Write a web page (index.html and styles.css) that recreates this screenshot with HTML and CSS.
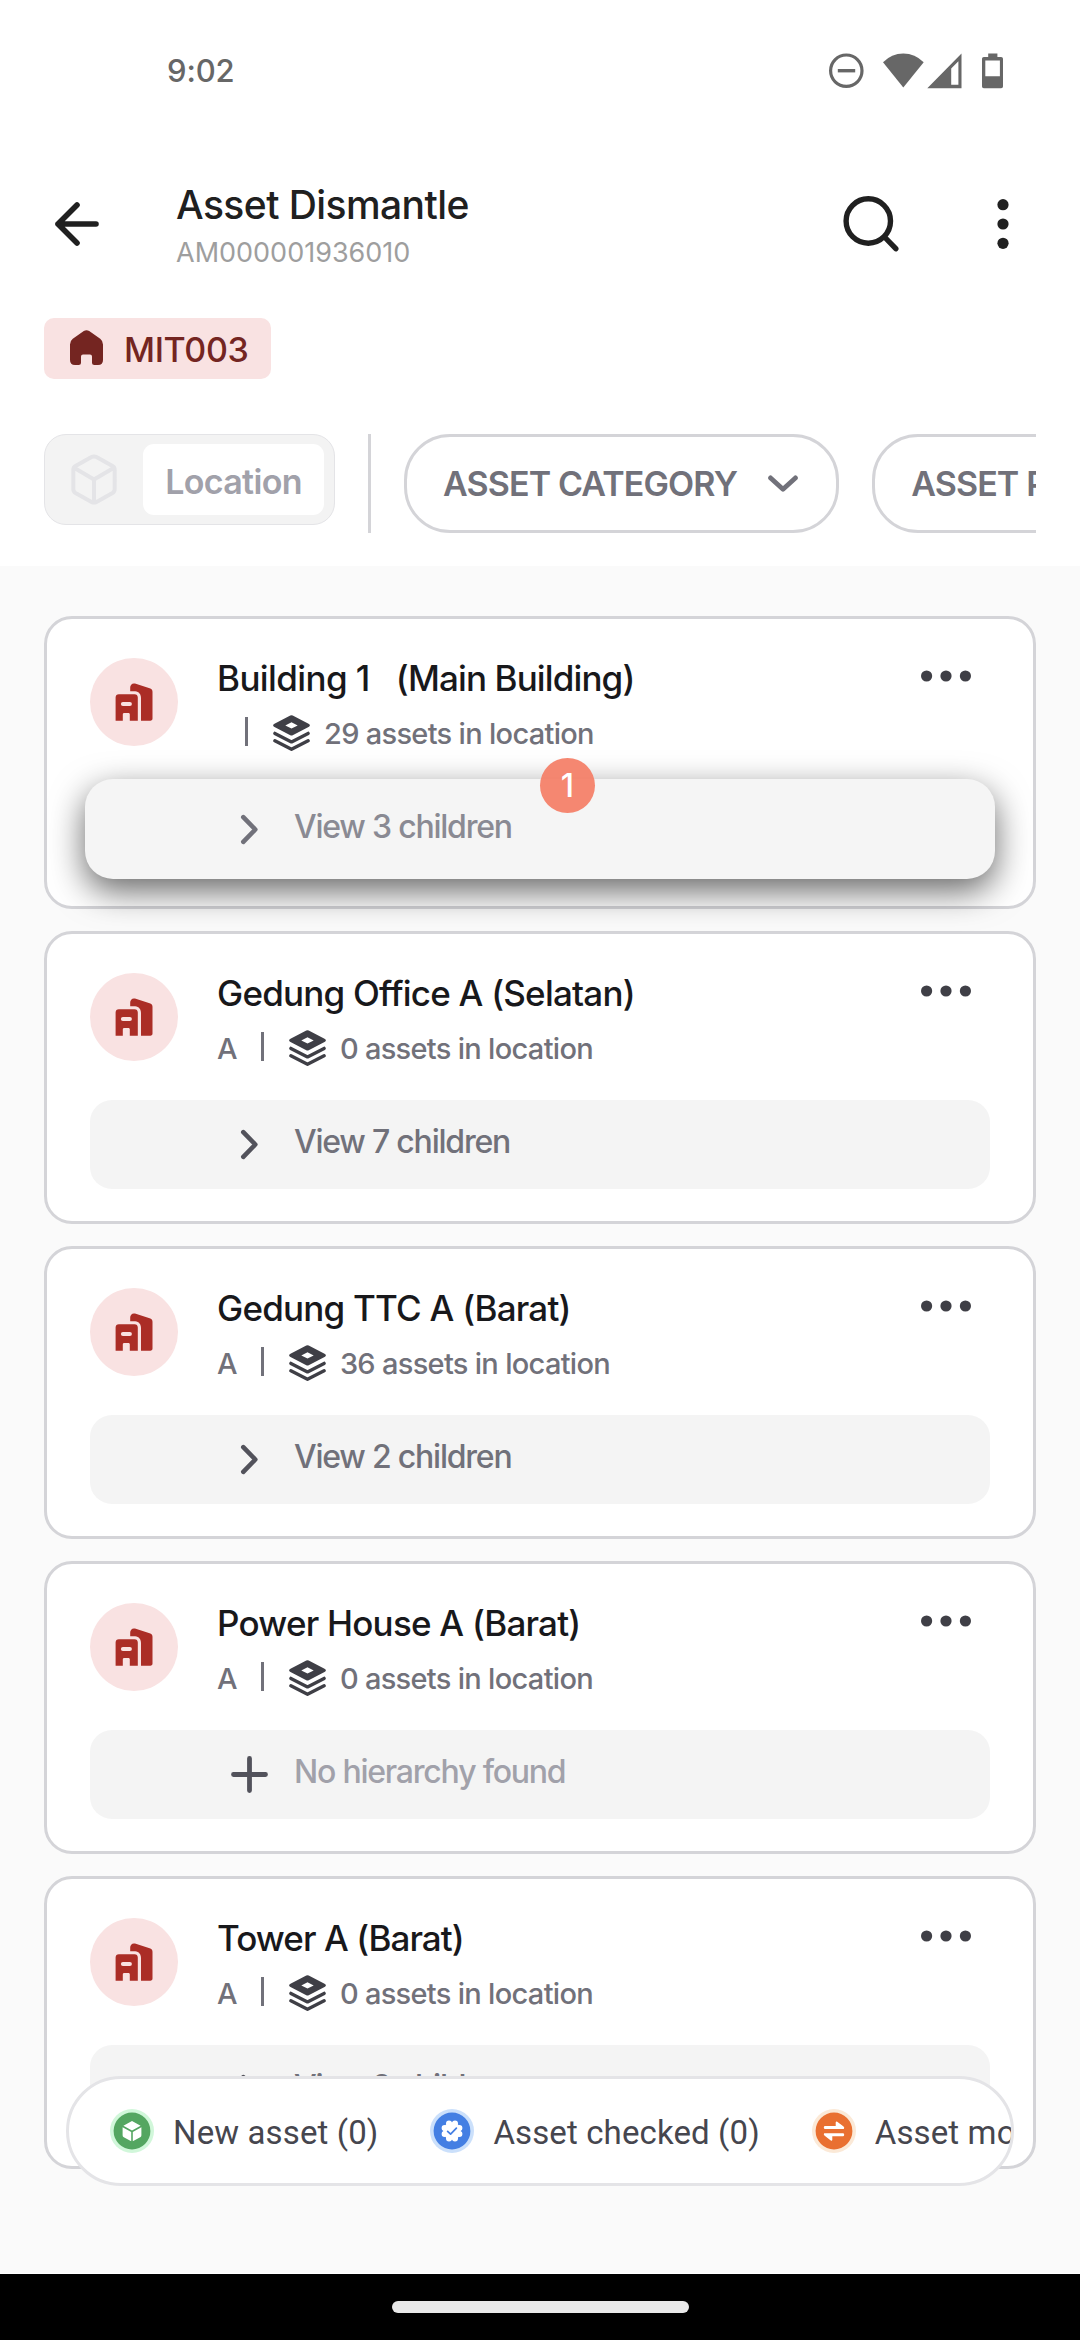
FILE: index.html
```html
<!DOCTYPE html>
<html lang="en">
<head>
<meta charset="utf-8">
<title>Asset Dismantle</title>
<link rel="stylesheet" href="styles.css">
</head>
<body>
<svg class="sprite" aria-hidden="true">
  <symbol id="building" viewBox="0 0 38 38">
    <path fill="#ab2d26" d="M15.2 8.3V4.6c0-2.9 2.1-4.7 4.8-4L34.6 5.200c1.900.7 2.900 1.600 2.900 3.600V35.500c0 1.400-.8 2.200-2.200 2.200H26V15c0-3.700-2-6.200-5.800-6.700z"/>
    <path fill="#ab2d26" fill-rule="evenodd" d="M.6 14.500c0-2.100 1.200-3.300 3.300-3.300h15.600c2.100 0 3.300 1.200 3.300 3.300v23.200h-8v-6.200c0-1-.5-1.500-1.500-1.500H9.300c-1 0-1.500.5-1.500 1.500v6.200H.6zM7.900 19a2 2 0 0 0 0 4h7a2 2 0 0 0 0-4z"/>
  </symbol>
  <symbol id="layers" viewBox="0 0 37 36">
    <path fill="#3f3f46" fill-rule="evenodd" d="M17.300.6q1.200-.6 2.400 0L36 8.900q1.800 1.300 0 2.800L19.700 20.200q-1.200.6-2.400 0L1 11.700Q-.8 10.200 1 8.900zM18.500 7.200L12.300 10.400l6.200 3.200 6.200-3.200z"/>
    <path fill="none" stroke="#3f3f46" stroke-width="3.400" stroke-linecap="round" stroke-linejoin="round" d="M1.900 18.400L18.500 26.900 35.100 18.400M1.900 25.800L18.500 34.300 35.100 25.800"/>
  </symbol>
  <symbol id="more" viewBox="0 0 50 12">
    <g fill="#3f3f46"><circle cx="5.600" cy="6" r="5.600"/><circle cx="25" cy="6" r="5.600"/><circle cx="44.400" cy="6" r="5.600"/></g>
  </symbol>
  <symbol id="chevron" viewBox="0 0 37 37">
    <path fill="none" stroke="currentColor" stroke-width="4.600" stroke-linecap="round" stroke-linejoin="round" d="M12.300 6.200L24.300 18.500 12.300 30.800"/>
  </symbol>
  <symbol id="plus" viewBox="0 0 37 37">
    <path fill="none" stroke="currentColor" stroke-width="4.800" stroke-linecap="round" d="M18.500 2.500v32M2.500 18.500h32"/>
  </symbol>
</svg>

<div class="screen">
  <div class="status">
    <span class="clock">9:02</span>
    <svg class="status-icons" width="176" height="36" viewBox="0 0 176 36">
      <circle cx="18.300" cy="17.700" r="15.700" fill="none" stroke="#676767" stroke-width="3.200"/>
      <path fill="#676767" d="M9.800 16h17.400v3.400H9.800z"/>
      <path fill="#676767" d="M55 9.300Q63.500.5 75.300.5T95.700 9.300L75.300 34.500z"/>
      <path fill="#676767" fill-rule="evenodd" d="M99.300 35.200L133.500.5v34.700zM123.200 15.500v16.200h7.200V8.300z"/>
      <path fill="#676767" fill-rule="evenodd" d="M160.200.5h9.200v3.600h3.700c1.200 0 1.900.8 1.900 1.900v27.300c0 1.200-.7 2-1.900 2h-17.200c-1.200 0-1.900-.8-1.900-2V6c0-1.100.7-1.900 1.900-1.900h4.300zM157.300 7.600v15.600h14.600V7.600z"/>
    </svg>
  </div>

  <header class="topbar">
    <svg class="back" width="44" height="46" viewBox="0 0 44 46"><path fill="none" stroke="#202020" stroke-width="5.600" stroke-linecap="round" stroke-linejoin="round" d="M41 23H3M22 4L3 23 22 42"/></svg>
    <div class="heading">
      <h1>Asset Dismantle</h1>
      <p>AM000001936010</p>
    </div>
    <svg class="search" width="56" height="58" viewBox="0 0 56 58"><g fill="none" stroke="#202020" stroke-width="5.400" stroke-linecap="round"><circle cx="25.300" cy="26" r="22.200"/><path d="M42 42.500L52.800 53.700"/></g></svg>
    <svg class="kebab" width="12" height="52" viewBox="0 0 12 52"><g fill="#202020"><circle cx="6" cy="6.700" r="5.600"/><circle cx="6" cy="26" r="5.600"/><circle cx="6" cy="45.300" r="5.600"/></g></svg>
  </header>

  <div class="site">
    <svg width="33" height="36" viewBox="0 0 33 36"><path fill="#742521" d="M13.800 1q2.700-1.600 5.400 0l11 7.800Q33 11 33 14.500V30q0 5-5 5h-3.500q-2.500 0-2.500-2.500v-6q0-2-2-2h-7q-2 0-2 2v6Q11 35 8.500 35H5q-5 0-5-5V14.500Q0 11 2.800 8.800z"/></svg>
    <span>MIT003</span>
  </div>

  <div class="filters">
    <div class="toggle">
      <svg width="46" height="51" viewBox="0 0 46 51"><path fill="none" stroke="#e4e4e7" stroke-width="4" stroke-linecap="round" stroke-linejoin="round" d="M20.500 3.100Q23 1.700 25.500 3.100L41.500 12Q43.700 13.300 43.700 16V35Q43.700 37.700 41.500 39L25.500 47.900Q23 49.300 20.500 47.900L4.500 39Q2.300 37.700 2.300 35V16Q2.300 13.300 4.500 12zM3.500 14L23 25.500 42.500 14M23 25.500V48"/></svg>
      <span class="segment">Location</span>
    </div>
    <i class="divider"></i>
    <div class="pill">
      <span>ASSET CATEGORY</span>
      <svg width="30" height="18" viewBox="0 0 30 18"><path fill="none" stroke="#71717a" stroke-width="4.800" stroke-linecap="round" stroke-linejoin="round" d="M2.600 2.900L15 14.300 27.400 2.900"/></svg>
    </div>
    <div class="pill"><span>ASSET POSITION</span></div>
  </div>

  <main class="list">
    <article class="card">
      <div class="head">
        <span class="avatar"><svg width="38" height="38"><use href="#building"/></svg></span>
        <div class="info">
          <h2><span class="loose">Building 1</span><span class="alias">(Main Building)</span></h2>
          <p><span class="code"></span><i></i><svg width="37" height="36"><use href="#layers"/></svg><span class="count">29 assets in location</span></p>
        </div>
        <svg class="more" width="50" height="12"><use href="#more"/></svg>
      </div>
      <div class="children raised">
        <svg width="37" height="37"><use href="#chevron"/></svg><span>View 3 children</span>
        <b class="badge">1</b>
      </div>
    </article>

    <article class="card">
      <div class="head">
        <span class="avatar"><svg width="38" height="38"><use href="#building"/></svg></span>
        <div class="info">
          <h2>Gedung Office A (Selatan)</h2>
          <p><span class="code">A</span><i></i><svg width="37" height="36"><use href="#layers"/></svg><span class="count">0 assets in location</span></p>
        </div>
        <svg class="more" width="50" height="12"><use href="#more"/></svg>
      </div>
      <div class="children">
        <svg width="37" height="37"><use href="#chevron"/></svg><span>View 7 children</span>
      </div>
    </article>

    <article class="card">
      <div class="head">
        <span class="avatar"><svg width="38" height="38"><use href="#building"/></svg></span>
        <div class="info">
          <h2>Gedung TTC A (Barat)</h2>
          <p><span class="code">A</span><i></i><svg width="37" height="36"><use href="#layers"/></svg><span class="count">36 assets in location</span></p>
        </div>
        <svg class="more" width="50" height="12"><use href="#more"/></svg>
      </div>
      <div class="children">
        <svg width="37" height="37"><use href="#chevron"/></svg><span>View 2 children</span>
      </div>
    </article>

    <article class="card">
      <div class="head">
        <span class="avatar"><svg width="38" height="38"><use href="#building"/></svg></span>
        <div class="info">
          <h2>Power House A (Barat)</h2>
          <p><span class="code">A</span><i></i><svg width="37" height="36"><use href="#layers"/></svg><span class="count">0 assets in location</span></p>
        </div>
        <svg class="more" width="50" height="12"><use href="#more"/></svg>
      </div>
      <div class="children empty">
        <svg width="37" height="37"><use href="#plus"/></svg><span>No hierarchy found</span>
      </div>
    </article>

    <article class="card">
      <div class="head">
        <span class="avatar"><svg width="38" height="38"><use href="#building"/></svg></span>
        <div class="info">
          <h2 class="tight">Tower A (Barat)</h2>
          <p><span class="code">A</span><i></i><svg width="37" height="36"><use href="#layers"/></svg><span class="count">0 assets in location</span></p>
        </div>
        <svg class="more" width="50" height="12"><use href="#more"/></svg>
      </div>
      <div class="children">
        <svg width="37" height="37"><use href="#chevron"/></svg><span>View 2 children</span>
      </div>
    </article>

    <div class="legend">
      <span class="key">
        <svg width="44" height="44" viewBox="0 0 44 44"><circle cx="22" cy="22" r="22" fill="#d1f7da"/><circle cx="22" cy="22" r="18.400" fill="#54a661"/><path fill="#fff" d="M22 12l8.600 4.700L22 21.400l-8.600-4.700zM12.600 18.200l8.600 4.700v9.400l-7.400-4q-1.200-.7-1.200-2zM31.400 18.200l-8.600 4.700v9.400l7.400-4q1.200-.7 1.200-2z"/></svg>
        <span>New asset (0)</span>
      </span>
      <span class="key">
        <svg width="44" height="44" viewBox="0 0 44 44"><circle cx="22" cy="22" r="22" fill="#cbe0fb"/><circle cx="22" cy="22" r="18.400" fill="#447fe3"/><g fill="#fff"><circle cx="22" cy="22" r="8.800"/><circle cx="29.400" cy="25" r="3"/><circle cx="25" cy="29.400" r="3"/><circle cx="19" cy="29.400" r="3"/><circle cx="14.600" cy="25" r="3"/><circle cx="14.600" cy="19" r="3"/><circle cx="19" cy="14.600" r="3"/><circle cx="25" cy="14.600" r="3"/><circle cx="29.400" cy="19" r="3"/></g><path fill="none" stroke="#447fe3" stroke-width="1.700" stroke-linecap="round" stroke-linejoin="round" d="M17.600 22.300l3 2.900 5.800-6"/></svg>
        <span>Asset checked (0)</span>
      </span>
      <span class="key">
        <svg width="44" height="44" viewBox="0 0 44 44"><circle cx="22" cy="22" r="22" fill="#fbe9d7"/><circle cx="22" cy="22" r="18.400" fill="#e97031"/><path fill="#fff" d="M12.800 19.900q-1-.1-1-1.400t1-1.400h10.900v-3.700q.2-1.500 1.500-.7l6.400 4.900q1.200 1.300.2 2.300zM31.200 24.200q1 .1 1 1.500t-1 1.500H20.300v3.600q-.2 1.500-1.500.7l-6.400-5q-1.200-1.300-.2-2.300z"/></svg>
        <span>Asset moved (0)</span>
      </span>
    </div>
  </main>

  <footer class="navbar"><i></i></footer>
</div>
</body>
</html>
```
FILE: styles.css
```css
* { box-sizing: border-box; margin: 0; padding: 0; }
body { background: #fff; font-family: Inter, "Liberation Sans", sans-serif; }
svg { display: block; flex: none; }
.sprite { position: absolute; width: 0; height: 0; }

.screen { width: 1080px; height: 2340px; display: flex; flex-direction: column; overflow: hidden; background: #fff; }

.status { height: 141px; padding: 0 76px 0 167px; display: flex; align-items: center; justify-content: space-between; }
.clock { font-size: 31px; font-weight: 500; letter-spacing: -0.15px; color: #676767; }

.topbar { height: 166px; padding: 0 71px 0 55px; display: flex; align-items: center; }
.heading { margin-left: 77px; padding-top: 10px; flex: 1; }
.heading h1 { font-size: 39px; font-weight: 500; line-height: 48px; letter-spacing: -0.57px; color: #202020; }
.heading p { font-size: 27px; line-height: 48px; color: #9e9e9e; }
.search { margin-right: 98px; }

.site { align-self: flex-start; margin: 11px 0 0 44px; height: 61px; width: 227px; padding: 0 0 1px 26px; display: flex; align-items: center; gap: 21px; border-radius: 10px; background: #f9e2e2; color: #742521; font-size: 34px; font-weight: 500; letter-spacing: -0.35px; }
.site span { padding-top: 3px; }

.filters { height: 187px; margin: 0 44px; padding-top: 55px; display: flex; align-items: flex-start; overflow: hidden; }
.toggle { flex: none; width: 291px; height: 91px; padding: 0 10px 0 26px; display: flex; align-items: center; justify-content: space-between; border: 1px solid #e4e4e7; border-radius: 22px; background: #f3f3f3; }
.segment { width: 181px; height: 71px; padding-top: 2px; border-radius: 11px; background: #fff; color: #a1a1aa; font-size: 34px; font-weight: 600; line-height: 71px; letter-spacing: -0.67px; text-align: center; }
.divider { flex: none; width: 3px; height: 99px; margin: 0 33px; background: #d4d4d8; }
.pill { flex: none; height: 99px; padding: 0 38px 0 36px; margin-right: 33px; display: flex; align-items: center; gap: 31px; border: 3px solid #d4d4d8; border-radius: 46px; color: #71717a; font-size: 34px; font-weight: 600; letter-spacing: -0.87px; white-space: nowrap; }

.list { position: relative; flex: 1; padding: 50px 44px 0; display: flex; flex-direction: column; gap: 22px; background: #fafafa; }
.card { flex: none; height: 293px; padding: 39px 43px 0; border: 3px solid #d4d4d8; border-radius: 28px; background: #fff; }
.head { height: 127px; display: flex; align-items: flex-start; }
.avatar { flex: none; width: 88px; height: 88px; border-radius: 50%; background: #f9e2e2; display: flex; align-items: center; justify-content: center; }
.info { flex: 1; margin: -2px 0 0 39px; }
.info h2 { display: flex; font-size: 35px; font-weight: 500; line-height: 44px; letter-spacing: -0.78px; color: #18181b; }
.info .tight { letter-spacing: -0.93px; }
.loose { letter-spacing: -0.6px; }
.alias { margin-left: 26px; letter-spacing: -0.88px; }
.info p { margin-top: 13px; height: 40px; display: flex; align-items: center; font-size: 29px; font-weight: 450; line-height: 40px; letter-spacing: -0.7px; color: #71717a; }
.code { min-width: 4px; padding-top: 1px; }
.info i { width: 3px; height: 29px; margin: 0 25px 4px 24px; background: #71717a; }
.count { margin-left: 14px; padding-top: 2px; }
.more { margin: 12px 19px 0 0; }

.children { position: relative; height: 89px; padding-left: 141px; display: flex; align-items: center; gap: 26px; border-radius: 22px; background: #f4f4f4; color: #52525b; }
.children span { padding-bottom: 6px; color: #71717a; font-size: 32px; font-weight: 450; letter-spacing: -1.22px; }
.children.empty span { color: #a1a1aa; }
.children.raised { height: 100px; margin: -6px -5px 0; padding-left: 146px; border-radius: 28px; background: #f5f5f5; color: #71717a; box-shadow: 0 12px 34px rgba(0, 0, 0, .6); }
.children.raised span { color: #8a8a93; }
.badge { position: absolute; left: 455px; top: -21px; width: 55px; height: 55px; border-radius: 50%; background: rgba(244, 128, 104, .94); color: #fff; font-size: 32px; font-weight: 500; line-height: 55px; text-align: center; }

.legend { position: absolute; left: 66px; top: 1510px; width: 948px; height: 110px; padding-left: 41px; display: flex; align-items: center; overflow: hidden; border: 3px solid #e4e4e7; border-radius: 55px; background: #fff; color: #46464e; font: 33px Roboto, sans-serif; letter-spacing: .12px; white-space: nowrap; }
.key { flex: none; display: flex; align-items: center; gap: 19px; margin-right: 52px; }
.key span { padding-top: 3px; }

.navbar { height: 66px; margin-top: 1px; display: flex; justify-content: center; align-items: center; background: #000; }
.navbar i { width: 297px; height: 12px; border-radius: 6px; background: #e9e9e9; }
```
